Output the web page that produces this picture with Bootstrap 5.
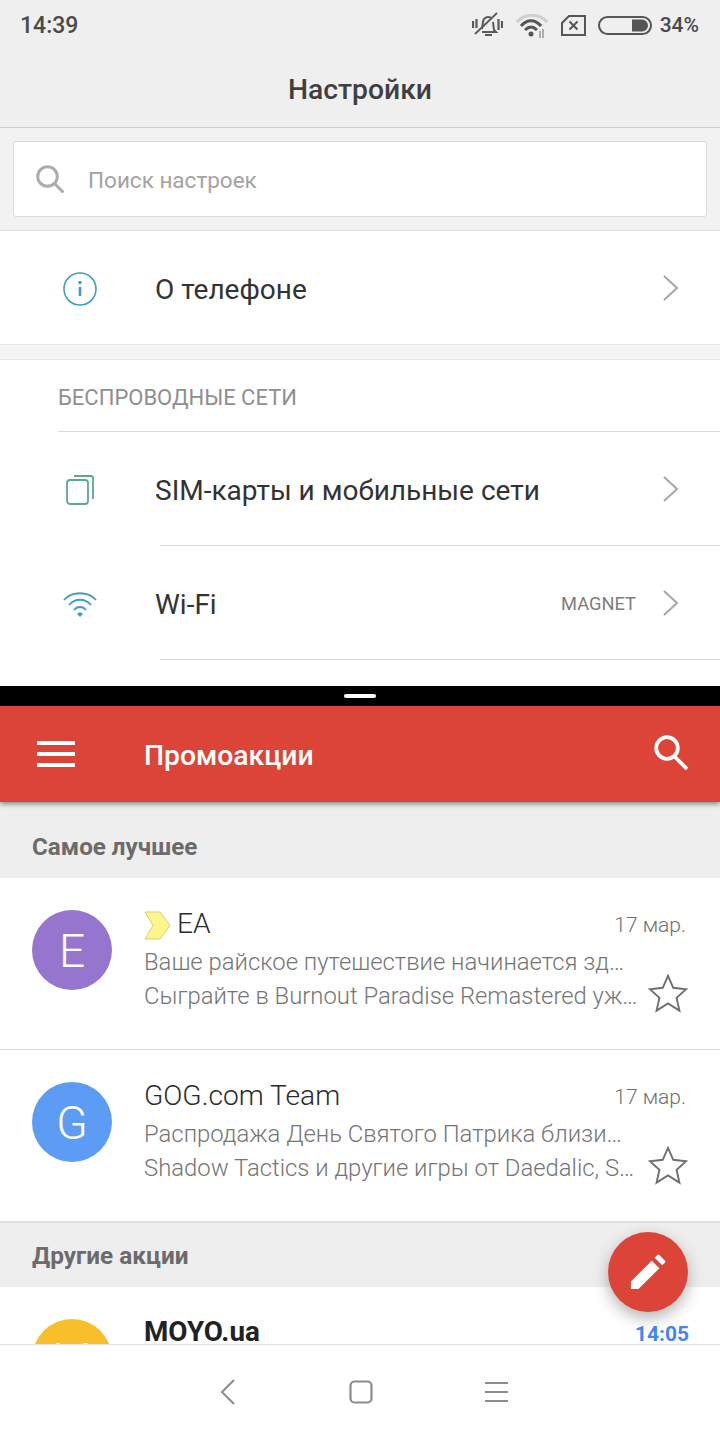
<!DOCTYPE html>
<html lang="ru">
<head>
<meta charset="utf-8">
<title>Split screen</title>
<link href="https://cdn.jsdelivr.net/npm/bootstrap@5.3.0/dist/css/bootstrap.min.css" rel="stylesheet">
<style>
html,body{margin:0;width:720px;height:1440px;overflow:hidden;background:#fff;font-family:Roboto,"Noto Sans",sans-serif}
.phone{position:relative;width:720px;height:1440px;overflow:hidden}
.pane-top{height:686px;overflow:hidden;background:#fff}
.status-bar{height:50px;background:#efefef;padding:0 21px 0 20px;color:#4a4a4a;font-weight:500;font-size:23px}
.status-time{padding-top:2px}
.status-pct{font-size:21px;margin-left:8px;padding-top:1px}
.st-wifi{margin-left:13px}
.st-sim{margin-left:13px}
.st-bat{margin-left:12px}
.title-bar{height:78px;background:#efefef;border-bottom:1px solid #cfcfcf;padding-top:4px;color:#3f3f3f;font-size:28.300px;font-weight:500}
.search-zone{height:103px;background:#f2f2f2;border-bottom:1px solid #dcdcdc;padding:13px}
.search-box{height:76px;background:#fff;border:1px solid #dcdcdc;border-radius:3px;padding-left:22px;color:#a3a3a3;font-size:22.500px}
.search-box span{margin-left:24px;padding-top:3px}
.set-row{height:114px;background:#fff;color:#333;font-size:28px}
.set-row .ico{width:155px;flex:none;padding-left:5px;padding-top:2px}
.set-text{padding-top:4px}
.set-about{border-bottom:1px solid #e6e6e6}
.gap-band{height:15px;background:#f4f4f4;border-bottom:1px solid #e6e6e6}
.sec-title{height:72px;margin-left:58px;border-bottom:1px solid #d9d9d9;color:#8f8f8f;font-size:22px;padding-top:4px}
.line-under{border-bottom:1px solid #d9d9d9;margin-left:160px;height:0}
.set-row.tall{height:113px}
.chev{margin-right:41px;flex:none}
.set-val{color:#7d7d7d;font-size:18.300px;margin-right:26px;padding-top:3px}
.divider-bar{height:20px;background:#000}
.divider-grip{width:32px;height:4px;background:#fff;border-radius:2px}
.gmail-bar{position:relative;height:96px;background:#dc4438;color:#fff;font-size:28.300px;font-weight:500;padding:0 30px 0 37px;box-shadow:0 2px 5px rgba(0,0,0,.45);z-index:2}
.gmail-title{margin-left:69px;padding-top:4px}
.gmail-find{margin-bottom:3px}
.band{background:#eeeeee;color:#6b6b6b;font-weight:700;padding-left:32px}
.band-a{height:76px;padding-top:14px;font-size:24.200px}
.band-b{height:65px;border-top:1px solid #e0e0e0;font-size:24.400px;padding-top:2px}
.mail{height:172px;background:#fff;border-bottom:1px solid #dedede;padding:32px 34px 0 32px}
.avatar{width:80px;height:80px;border-radius:50%;color:#fff;font-size:46px;font-weight:300;flex:none;padding-top:2px}
.av-e{background:#9575cd}
.av-g{background:#5c9cf5}
.av-m{background:#f7c02a}
.mail-body{margin-left:32px;min-width:0;flex:1}
.mail-head{height:35px;padding-bottom:9px;color:#2b2b2b;font-size:28.200px;font-weight:300;line-height:27px}
.ribbon{margin-top:5px;flex:none}
.ea-name{margin-left:6px}
.mail-date{color:#6f6f6f;font-size:21px;font-weight:300;padding-top:4px}
.mail-lines{width:496px;flex:none}
.mail-line{color:#757575;font-size:23.850px;font-weight:300;line-height:34px;white-space:nowrap}
.mail-star{margin-top:28px;margin-right:-2px;flex:none}
.mail-cut{height:57px;overflow:hidden;background:#fff;padding:32px 31px 0 32px}
.mail-sender{color:#222;font-size:27.800px;font-weight:700;line-height:24px;margin-top:1px}
.mail-time{color:#4285f4;font-size:21px;font-weight:700;line-height:24px;margin-top:3px}
.nav-strip{height:96px;background:#fff;border-top:1px solid #e0e0e0;padding:0 0 2px 220px}
.nav-home{margin-left:114px}
.nav-menu{margin-left:112px}
.fab{position:absolute;left:608px;top:1232px;width:80px;height:80px;border-radius:50%;background:#dc4438;box-shadow:0 6px 16px rgba(0,0,0,.3);z-index:5}
</style>
</head>
<body>
<div class="phone">
  <div class="pane-top">
    <div class="status-bar d-flex align-items-center">
      <span class="status-time">14:39</span>
      <div class="ms-auto d-flex align-items-center">
        <svg width="31" height="28" viewBox="0 0 31 28" fill="none" stroke="#5a5a5a" stroke-width="2"><path d="M10 18l1-7a5 5 0 0 1 8-4M21 11l1 8 2 2H10M13 24h7"/><path d="M3 23L25 2" stroke-width="1.800"/><path d="M1 10v7M4.500 8v9M26.500 8v11M30 10v7" stroke-width="2.200"/></svg>
        <svg class="st-wifi" width="32" height="25" viewBox="0 0 32 25" fill="none"><path d="M1 9C9 0 23 0 31 9" stroke="#cfcfcf" stroke-width="3"/><path d="M5 13C11 6 19 6 25 13" stroke="#555" stroke-width="3"/><path d="M9 17C13 13 17 13 21 17" stroke="#555" stroke-width="3"/><circle cx="15" cy="21" r="2.500" fill="#555"/><path d="M24 18v7M27 16v9" stroke="#999" stroke-width="1.500"/></svg>
        <svg class="st-sim" width="25" height="21" viewBox="0 0 25 21" fill="none" stroke="#555" stroke-width="2"><path d="M8 1H24V20H1V8Z"/><path d="M8.500 6.500l8 8M16.500 6.500l-8 8"/></svg>
        <svg class="st-bat" width="54" height="19" viewBox="0 0 54 19" fill="none"><rect x="1" y="1" width="52" height="17" rx="8.500" stroke="#555" stroke-width="2"/><path d="M34 3.500H44a6 6 0 0 1 0 12H34Z" fill="#555"/></svg>
        <span class="status-pct">34%</span>
      </div>
    </div>
    <div class="title-bar d-flex align-items-center justify-content-center">Настройки</div>
    <div class="search-zone">
      <div class="search-box d-flex align-items-center">
        <svg width="28" height="28" viewBox="0 0 28 28" fill="none" stroke="#adadad" stroke-width="3"><circle cx="11.500" cy="11.500" r="9.800"/><path d="M18.500 18.500l9 9"/></svg>
        <span>Поиск настроек</span>
      </div>
    </div>
    <div class="set-row set-about d-flex align-items-center">
      <div class="ico d-flex align-items-center justify-content-center"><svg width="34" height="34" viewBox="0 0 34 34" fill="none"><circle cx="17" cy="17" r="16" stroke="#3f9cc4" stroke-width="1.600"/><circle cx="17" cy="10.500" r="1.700" fill="#3f9cc4"/><path d="M17 15v9" stroke="#3f9cc4" stroke-width="2.600"/></svg></div>
      <span class="set-text">О телефоне</span>
      <svg class="chev ms-auto" width="17" height="26" viewBox="0 0 17 26" fill="none" stroke="#a6a6a6" stroke-width="2"><path d="M2 1l13 12L2 25"/></svg>
    </div>
    <div class="gap-band"></div>
    <div class="sec-title d-flex align-items-center">БЕСПРОВОДНЫЕ СЕТИ</div>
    <div class="set-row tall d-flex align-items-center">
      <div class="ico d-flex align-items-center justify-content-center"><svg width="30" height="32" viewBox="0 0 28 32" fill="none" stroke="#5aa897" stroke-width="1.800"><rect x="1" y="6" width="21" height="24" rx="3"/><path d="M8 2h17a2 2 0 0 1 2 2v21"/></svg></div>
      <span class="set-text">SIM-карты и мобильные сети</span>
      <svg class="chev ms-auto" width="17" height="26" viewBox="0 0 17 26" fill="none" stroke="#a6a6a6" stroke-width="2"><path d="M2 1l13 12L2 25"/></svg>
    </div>
    <div class="line-under"></div>
    <div class="set-row tall d-flex align-items-center">
      <div class="ico d-flex align-items-center justify-content-center"><svg width="36" height="28" viewBox="0 0 36 28" fill="none" stroke="#3f9cc4" stroke-width="1.800"><path d="M2 10C10 1 26 1 34 10"/><path d="M7 15C13 8 23 8 29 15"/><path d="M12 20C15 16 21 16 24 20"/><path d="M18 27l-3-3 3-2 3 2Z" fill="#3f9cc4" stroke="none"/></svg></div>
      <span class="set-text">Wi-Fi</span>
      <span class="set-val ms-auto">MAGNET</span>
      <svg class="chev" width="17" height="26" viewBox="0 0 17 26" fill="none" stroke="#a6a6a6" stroke-width="2"><path d="M2 1l13 12L2 25"/></svg>
    </div>
    <div class="line-under"></div>
  </div>
  <div class="divider-bar d-flex align-items-center justify-content-center"><div class="divider-grip"></div></div>
  <div class="gmail-bar d-flex align-items-center">
    <svg width="38" height="26" viewBox="0 0 38 26" fill="#fff"><rect width="38" height="4" y="0"/><rect width="38" height="4" y="11"/><rect width="38" height="4" y="22"/></svg>
    <span class="gmail-title">Промоакции</span>
    <svg class="gmail-find ms-auto" width="36" height="36" viewBox="0 0 36 36" fill="none" stroke="#fff" stroke-width="3.800"><circle cx="13" cy="13" r="10.800"/><path d="M20 21l13 13"/></svg>
  </div>
  <div class="band band-a d-flex align-items-center">Самое лучшее</div>
  <div class="mail d-flex">
    <div class="avatar av-e d-flex align-items-center justify-content-center">E</div>
    <div class="mail-body">
      <div class="mail-head d-flex align-items-center">
        <svg class="ribbon" width="27" height="29" viewBox="0 0 27 29"><path d="M1 1H16L26 14.500 16 28H1L9 14.500Z" fill="#fdf68c" stroke="#d9cf6a"/></svg>
        <span class="ea-name">EA</span>
        <span class="mail-date ms-auto">17 мар.</span>
      </div>
      <div class="d-flex">
        <div class="mail-lines">
          <div class="mail-line">Ваше райское путешествие начинается зд…</div>
          <div class="mail-line">Сыграйте в Burnout Paradise Remastered уж…</div>
        </div>
        <svg class="mail-star ms-auto" width="40" height="40" viewBox="0 0 42 42" fill="none" stroke="#707070" stroke-width="2"><path d="M21 3l5.500 12.500 13.500 1.500-10 9 3 13.500L21 32l-12 7.500 3-13.500-10-9 13.500-1.500Z"/></svg>
      </div>
    </div>
  </div>
  <div class="mail d-flex">
    <div class="avatar av-g d-flex align-items-center justify-content-center">G</div>
    <div class="mail-body">
      <div class="mail-head d-flex align-items-center">
        <span>GOG.com Team</span>
        <span class="mail-date ms-auto">17 мар.</span>
      </div>
      <div class="d-flex">
        <div class="mail-lines">
          <div class="mail-line">Распродажа День Святого Патрика близи…</div>
          <div class="mail-line">Shadow Tactics и другие игры от Daedalic, S…</div>
        </div>
        <svg class="mail-star ms-auto" width="40" height="40" viewBox="0 0 42 42" fill="none" stroke="#707070" stroke-width="2"><path d="M21 3l5.500 12.500 13.500 1.500-10 9 3 13.500L21 32l-12 7.500 3-13.500-10-9 13.500-1.500Z"/></svg>
      </div>
    </div>
  </div>
  <div class="band band-b d-flex align-items-center">Другие акции</div>
  <div class="mail-cut d-flex">
    <div class="avatar av-m d-flex align-items-center justify-content-center">M</div>
    <div class="mail-body d-flex">
      <span class="mail-sender">MOYO.ua</span>
      <span class="mail-time ms-auto">14:05</span>
    </div>
  </div>
  <div class="nav-strip d-flex align-items-center">
    <svg width="15" height="26" viewBox="0 0 15 26" fill="none" stroke="#8c8c8c" stroke-width="2"><path d="M14 1L2 13l12 12"/></svg>
    <svg class="nav-home" width="24" height="24" viewBox="0 0 24 24" fill="none" stroke="#8c8c8c" stroke-width="2.200"><rect x="1.500" y="1.500" width="21" height="21" rx="4"/></svg>
    <svg class="nav-menu" width="23" height="22" viewBox="0 0 23 22" fill="none" stroke="#8c8c8c" stroke-width="2"><path d="M0 2h23M0 11h23M0 20h23"/></svg>
  </div>
  <div class="fab d-flex align-items-center justify-content-center">
    <svg width="36" height="36" viewBox="0 0 38 38" fill="#fff"><path d="M1 37V29L23 7l8 8L9 37Z"/><path d="M26 4l3-3a1.500 1.500 0 0 1 2 0l6 6a1.500 1.500 0 0 1 0 2l-3 3Z"/></svg>
  </div>
</div>
</body>
</html>
